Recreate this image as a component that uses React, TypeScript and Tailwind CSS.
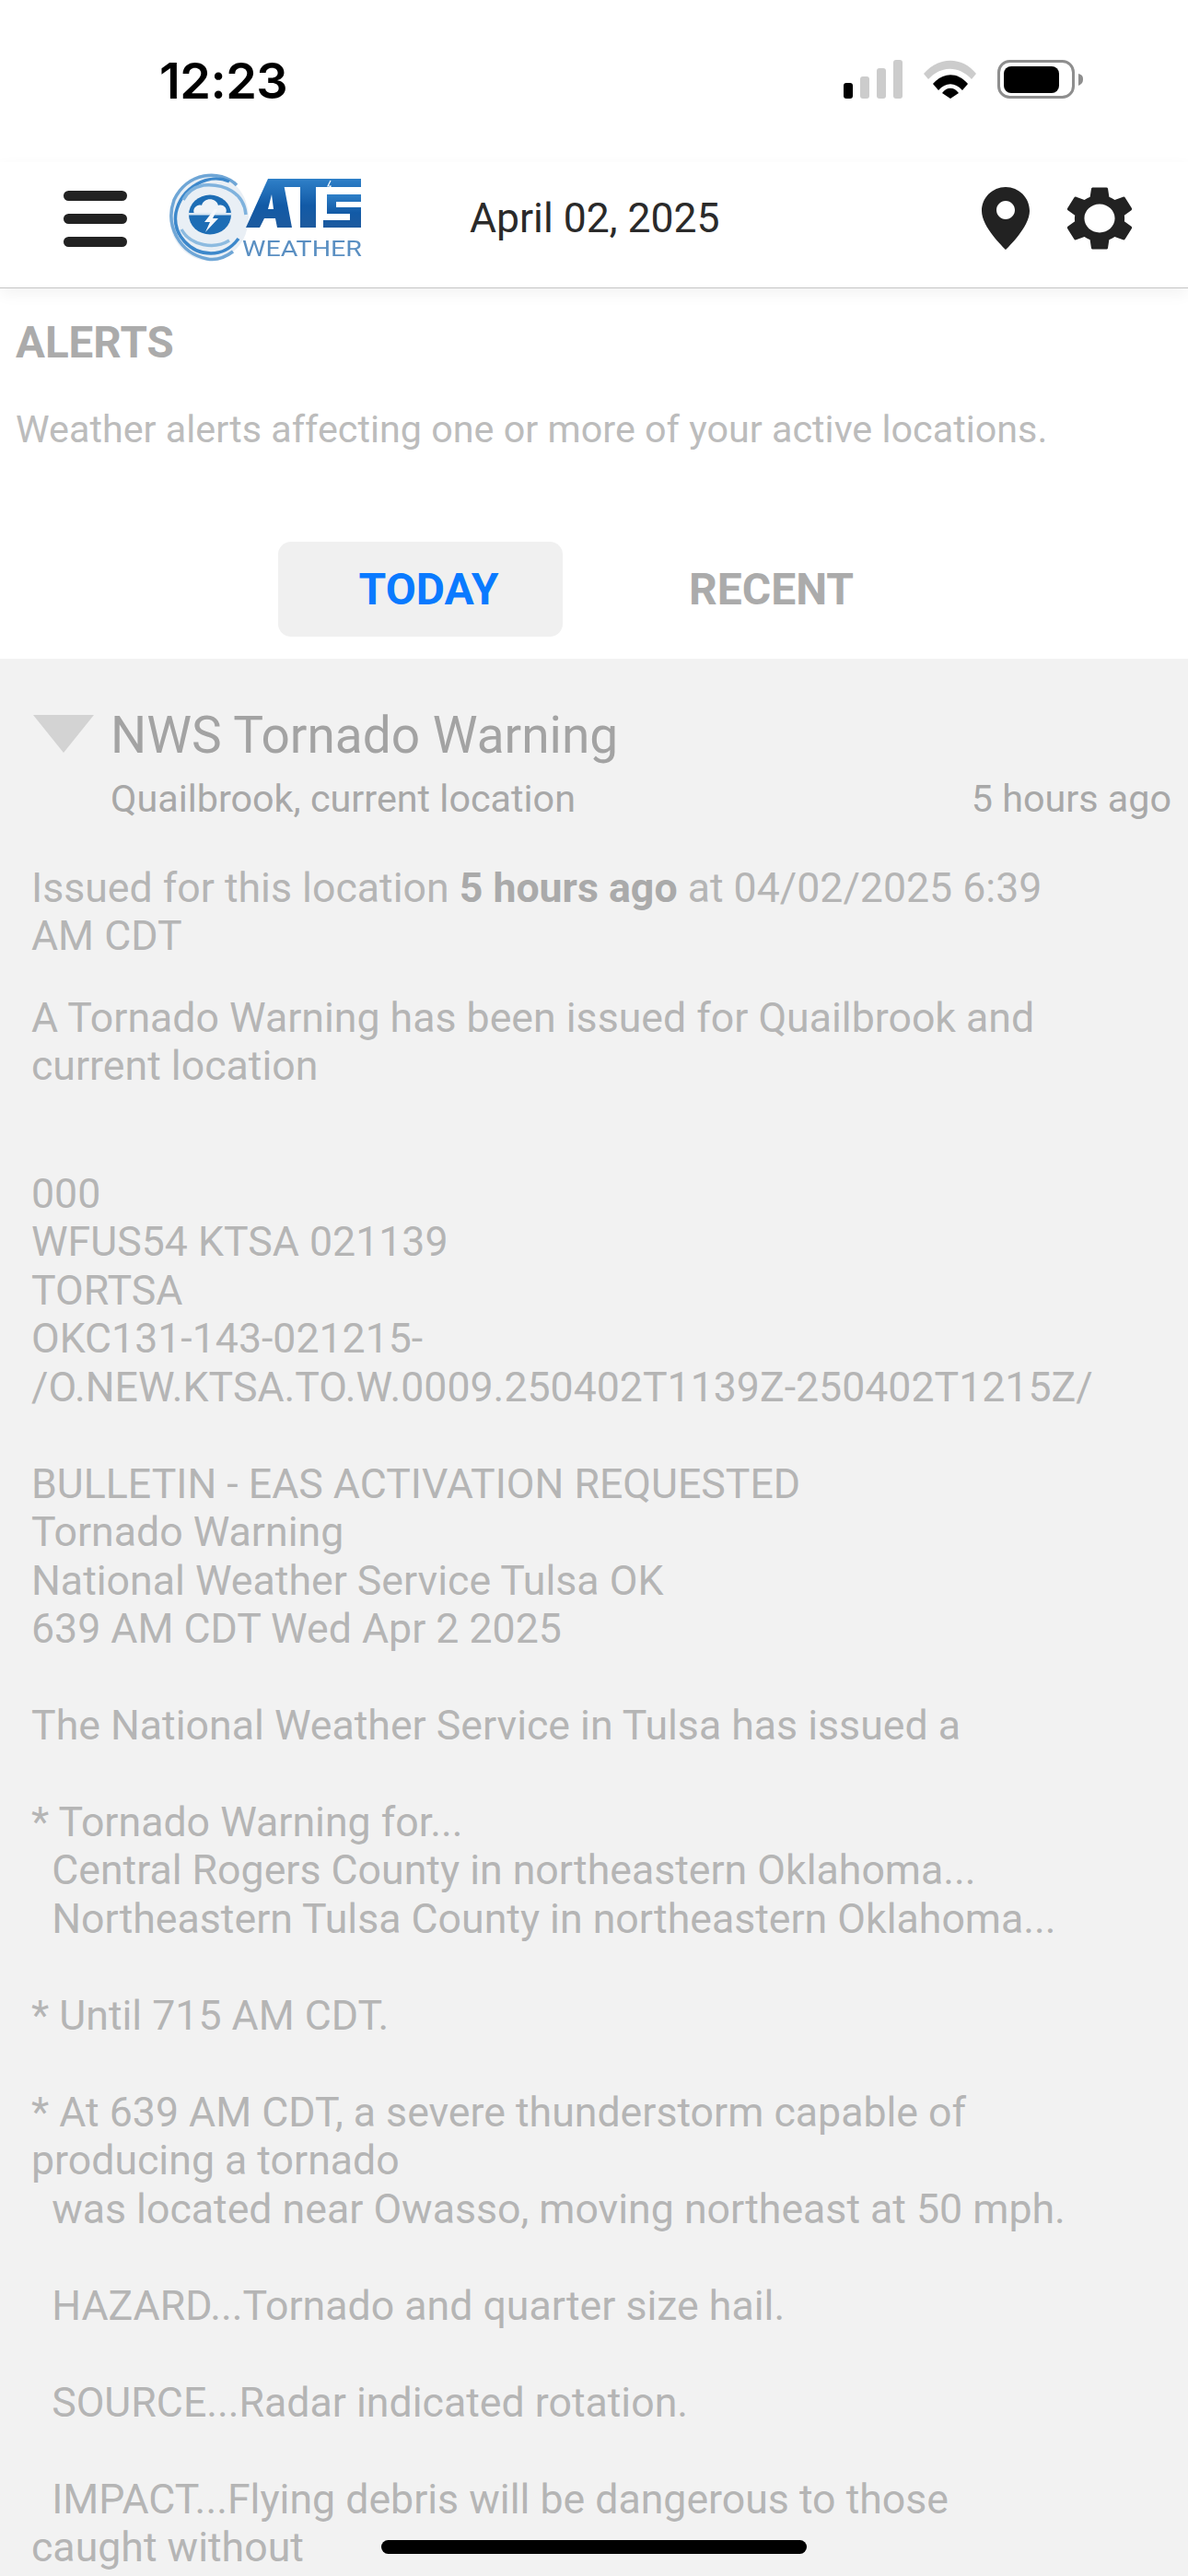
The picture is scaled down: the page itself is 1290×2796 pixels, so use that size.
import React from "react";

const Logo = () => (
  <svg width="212" height="100" viewBox="0 0 212 100" className="ml-[45px] shrink-0" style={{ filter: "blur(0.7px)" }}>
    <defs>
      <linearGradient id="ats" x1="0" y1="0" x2="0" y2="1">
        <stop offset="0" stopColor="#2f80c8" />
        <stop offset="0.55" stopColor="#125aa6" />
        <stop offset="1" stopColor="#1d5a9e" />
      </linearGradient>
    </defs>
    <ellipse cx="44" cy="49" rx="43" ry="47" fill="#e9eff5" />
    <path d="M74 14C56 -4 20 0 6 30C-4 58 12 88 42 94C52 96 62 92 70 86" fill="none" stroke="#6fa6d6" strokeWidth="3.500" />
    <path d="M66 10C44 0 14 16 8 44C4 68 24 88 46 88C60 88 70 80 76 72" fill="none" stroke="#3d88cb" strokeWidth="3.500" />
    <path d="M84 46C82 22 60 12 38 14C28 16 20 22 16 30" fill="none" stroke="#7fb2dd" strokeWidth="3.500" />
    <path d="M14 62C24 80 50 84 66 74" fill="none" stroke="#8dbbe0" strokeWidth="3.500" />
    <ellipse cx="45" cy="46" rx="23" ry="21.500" fill="#1d6db5" />
    <path d="M28 45C25 39 32 34 36 36C38 27 52 27 54 36C59 34 65 39 62 45Z" fill="#eef3f8" />
    <rect x="21" y="44" width="48" height="2.500" fill="#dbe8f3" />
    <path d="M50 40L39 54H45L40 65L54 50H48L53 40Z" fill="#f5f8fb" />
    <path fillRule="evenodd" d="M84 60L108 7H124L134 60H118L116 50H104L99 60ZM108 40H114L112 24Z" fill="url(#ats)" />
    <path d="M124 7H209V16H160V60H143V16H124Z" fill="url(#ats)" />
    <path d="M172 24H209V32H182V38H209V60H168V52H197V45H172Z" fill="url(#ats)" />
    <path d="M176 9L173 15L176 15L173 22" fill="none" stroke="#ffffff" strokeWidth="1.200" />
    <text x="80" y="91" textLength="130" lengthAdjust="spacingAndGlyphs" fill="#5a8fc2" style={{ fontFamily: "Roboto, sans-serif", fontSize: 24 }}>WEATHER</text>
  </svg>
);

const bulletin = "000\nWFUS54 KTSA 021139\nTORTSA\nOKC131-143-021215-\n/O.NEW.KTSA.TO.W.0009.250402T1139Z-250402T1215Z/\n\nBULLETIN - EAS ACTIVATION REQUESTED\nTornado Warning\nNational Weather Service Tulsa OK\n639 AM CDT Wed Apr 2 2025\n\nThe National Weather Service in Tulsa has issued a\n\n* Tornado Warning for...\n  Central Rogers County in northeastern Oklahoma...\n  Northeastern Tulsa County in northeastern Oklahoma...\n\n* Until 715 AM CDT.\n\n* At 639 AM CDT, a severe thunderstorm capable of\nproducing a tornado\n  was located near Owasso, moving northeast at 50 mph.\n\n  HAZARD...Tornado and quarter size hail.\n\n  SOURCE...Radar indicated rotation.\n\n  IMPACT...Flying debris will be dangerous to those\ncaught without";

export default function App() {
  return (
    <div className="relative h-[2796px] w-[1290px] overflow-hidden bg-white font-['Roboto',sans-serif]">
      <div className="flex h-[176px] items-start">
        <div className="ml-[173px] mt-[59px] text-[54px] font-semibold leading-[58px] text-black font-['Inter',sans-serif] tracking-[-0.5px]">12:23</div>
        <div className="ml-auto mr-[113px] mt-[65px] flex items-start">
          <svg width="64" height="42" viewBox="0 0 64 42">
            <rect x="0" y="25" width="10" height="17" rx="3" fill="#000" />
            <rect x="18" y="18" width="10" height="24" rx="3" fill="#ccc" />
            <rect x="36" y="9" width="10" height="33" rx="3" fill="#ccc" />
            <rect x="54" y="0" width="10" height="42" rx="3" fill="#ccc" />
          </svg>
          <svg width="58" height="42" viewBox="0 0 58 42" className="ml-[23px]">
            <path d="M0 15C16 -4 42 -4 57 15L52 21C38 6 19 6 5 21Z" fill="#ccc" />
            <path d="M10 26C21 13 37 13 48 26L42 33C34 24 24 24 16 33Z" fill="#000" />
            <path d="M20 36C25 29 33 29 38 36L29 42Z" fill="#000" />
          </svg>
          <svg width="94" height="42" viewBox="0 0 94 42" className="ml-[22px]">
            <rect x="1.5" y="1.5" width="81" height="39" rx="12" fill="#fff" stroke="#8e8e8e" strokeWidth="3" />
            <rect x="7" y="7" width="60" height="29" rx="8" fill="#000" />
            <path d="M88 15C92 16 93 18 93 21C93 24 92 26 88 28Z" fill="#8e8e8e" />
          </svg>
        </div>
      </div>

      <header className="flex h-[137px] items-center border-b border-[#c4c4c4] pb-[14px] shadow-[0_6px_16px_rgba(0,0,0,0.05)]">
        <div className="ml-[69px] flex w-[69px] shrink-0 flex-col gap-[14px]">
          <div className="h-[11px] rounded-full bg-[#222]" />
          <div className="h-[11px] rounded-full bg-[#222]" />
          <div className="h-[11px] rounded-full bg-[#222]" />
        </div>
        <Logo />
        <div className="ml-[115px] text-[44.500px] leading-[52px] text-[#2a2a2a]">April 02, 2025</div>
        <div className="ml-auto mr-[61px] flex items-center gap-[41px]">
          <svg width="52" height="68" viewBox="0 0 52 68">
            <path fillRule="evenodd" d="M26 0C11.6 0 0 11.6 0 26C0 44 26 68 26 68C26 68 52 44 52 26C52 11.6 40.4 0 26 0ZM26 35C20.5 35 16 30.5 16 25C16 19.5 20.5 15 26 15C31.500 15 36 19.500 36 25C36 30.500 31.500 35 26 35Z" fill="#222" />
          </svg>
          <svg width="70" height="70" viewBox="2.7 2 18.600 20" preserveAspectRatio="none">
            <path fill="#222" fillRule="evenodd" d="M19.14 12.94c.04-.3.06-.61.06-.94 0-.32-.02-.64-.07-.94l2.03-1.58a.49.49 0 0 0 .12-.61l-1.92-3.320a.488.488 0 0 0-.59-.22l-2.390.960c-.5-.38-1.030-.7-1.620-.94l-.36-2.540a.484.484 0 0 0-.48-.41h-3.840c-.24 0-.43.17-.47.41l-.36 2.540c-.59.24-1.130.57-1.620.94l-2.390-.960c-.22-.08-.47 0-.59.22L2.740 8.870c-.12.21-.08.47.12.61l2.030 1.580c-.05.3-.09.63-.09.94s.02.64.07.94l-2.030 1.580a.49.49 0 0 0-.12.61l1.920 3.320c.12.22.37.29.59.22l2.390-.960c.5.38 1.030.7 1.620.94l.36 2.540c.05.24.24.41.48.41h3.840c.24 0 .44-.17.47-.41l.36-2.540c.59-.24 1.130-.56 1.620-.94l2.390.960c.22.08.47 0 .59-.22l1.920-3.320c.12-.22.07-.47-.12-.61l-2.010-1.580zM12 16.400c-2.420 0-4.400-1.980-4.400-4.400s1.980-4.400 4.400-4.400 4.400 1.980 4.400 4.400-1.980 4.400-4.400 4.400z" />
          </svg>
        </div>
      </header>

      <div className="flex flex-col">
        <h1 className="mt-[32px] pl-[17px] text-[47.500px] font-bold leading-[54px] text-[#ababab]">ALERTS</h1>
        <p className="mt-[42px] pl-[17px] text-[41.300px] leading-[50px] text-[#bcbcbc]">Weather alerts affecting one or more of your active locations.</p>
        <div className="mt-[97px] flex items-stretch pl-[302px]">
          <div className="flex h-[103px] w-[309px] items-center justify-center rounded-[14px] bg-[#f0f0f0] pl-[18px] text-[48px] font-bold text-[#0a7aff]">TODAY</div>
          <div className="flex items-center pl-[137px] text-[48px] font-bold text-[#ababab]">RECENT</div>
        </div>
      </div>

      <section className="mt-[24px] h-[2200px] bg-[#f2f2f2]">
        <div className="flex items-start pl-[36px] pt-[57px]">
          <svg width="66" height="42" viewBox="0 0 66 42" className="mt-[4px] shrink-0">
            <path d="M0 0H66L33 41Z" fill="#d3d3d3" />
          </svg>
          <div className="ml-[18px] flex-1">
            <div className="mt-[-6px] text-[55px] leading-[64px] text-[#a3a3a3]">NWS Tornado Warning</div>
            <div className="mt-[12px] flex items-center justify-between pr-[18px] text-[41.300px] leading-[50px] text-[#a8a8a8]">
              <span>Quailbrook, current location</span>
              <span>5 hours ago</span>
            </div>
          </div>
        </div>
        <div className="mt-[46px] px-[34px] text-[44.650px] leading-[52.470px] text-[#b5b5b5]">
          <p className="w-[1150px]">Issued for this location <b className="font-bold text-[#aaa]">5 hours ago</b> at 04/02/2025 6:39 AM CDT</p>
          <p className="mt-[36px] w-[1150px]">A Tornado Warning has been issued for Quailbrook and current location</p>
          <p className="mt-[86px] whitespace-pre-wrap">{bulletin}</p>
        </div>
      </section>

      <div className="absolute left-[414px] top-[2757px] h-[15px] w-[462px] rounded-full bg-black" />
    </div>
  );
}
